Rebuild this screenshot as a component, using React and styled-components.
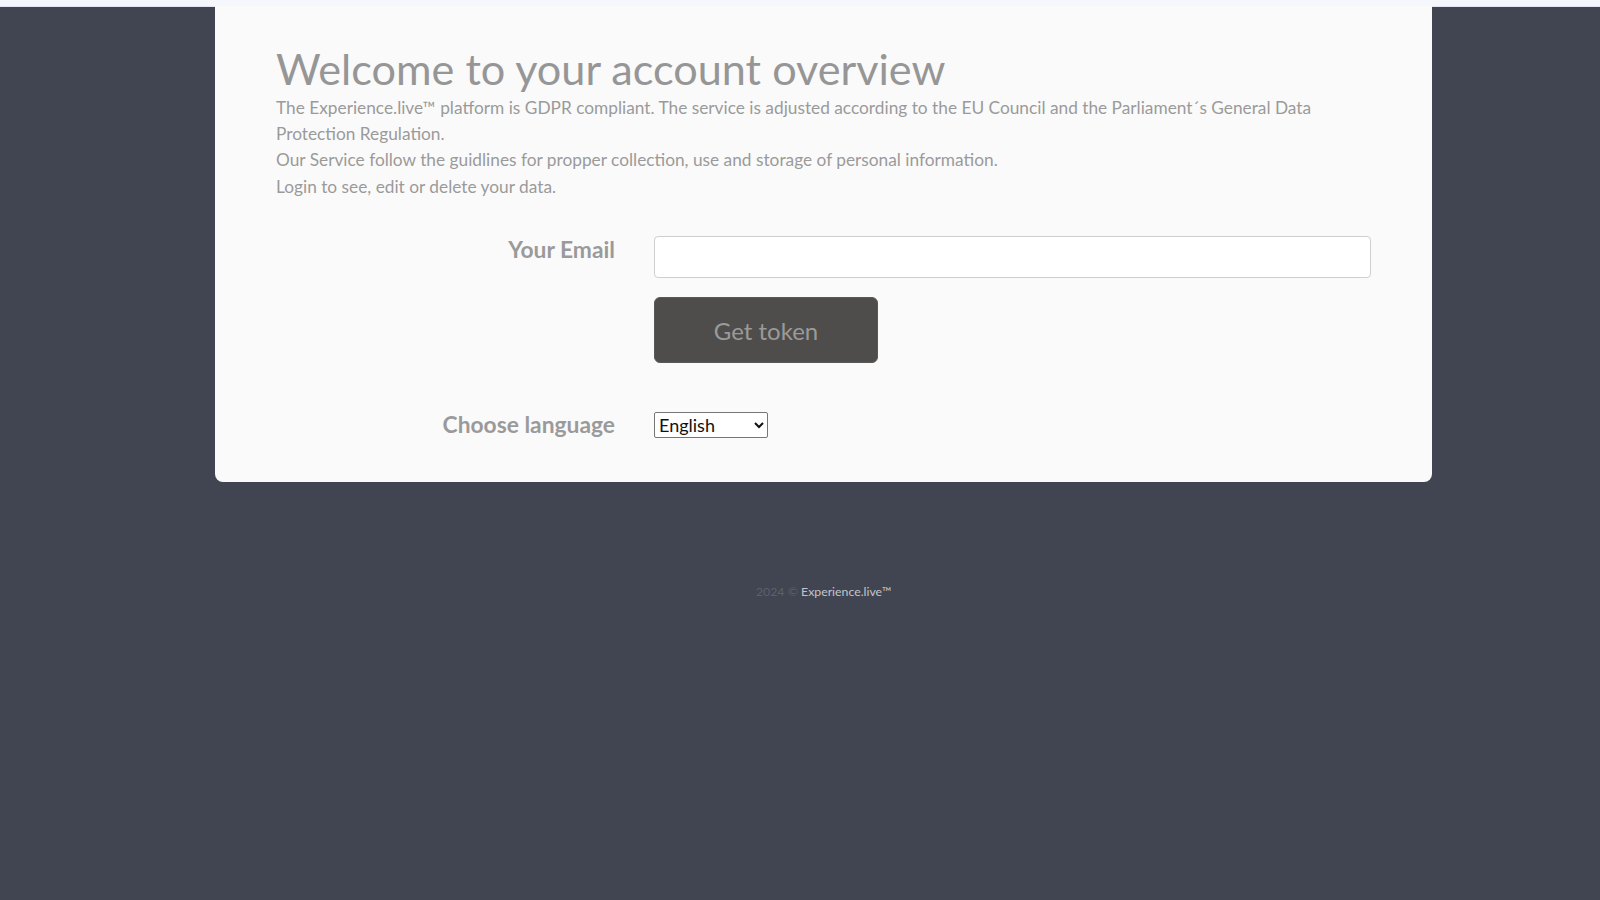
import React from "react";
import styled, { createGlobalStyle } from "styled-components";

const GlobalStyle = createGlobalStyle`
  html, body {
    margin: 0;
    padding: 0;
    background-color: #414551;
    font-family: Lato, "Open Sans", "Liberation Sans", sans-serif;
  }
  * {
    box-sizing: border-box;
  }
`;

export default function App() {
  return (
    <>
      <GlobalStyle />
      <TopStrip />
      <Page>
        <Card>
          <Title>Welcome to your account overview</Title>
          <Intro>
            The Experience.live™ platform is GDPR compliant. The service is
            adjusted according to the EU Council and the Parliament´s General
            Data Protection Regulation.
            <br />
            Our Service follow the guidlines for propper collection, use and
            storage of personal information.
            <br />
            Login to see, edit or delete your data.
          </Intro>

          <Form onSubmit={(e) => e.preventDefault()}>
            <FormRow>
              <Label htmlFor="email">Your Email</Label>
              <Field>
                <EmailInput id="email" type="email" />
                <TokenButton type="submit">Get token</TokenButton>
              </Field>
            </FormRow>

            <FormRow $center>
              <Label htmlFor="lang">Choose language</Label>
              <Field>
                <LangSelect id="lang" defaultValue="en">
                  <option value="en">English</option>
                  <option value="de">Deutsch</option>
                  <option value="da">Dansk</option>
                </LangSelect>
              </Field>
            </FormRow>
          </Form>
        </Card>

        <Footer>
          <FooterYear>2024 © </FooterYear>
          <FooterBrand>Experience.live™</FooterBrand>
        </Footer>
      </Page>
    </>
  );
}

const TopStrip = styled.div`
  height: 7px;
  background-color: #f6f7fc;
  border-bottom: 1px solid #e2e6f0;
`;

const Page = styled.main`
  padding-left: 215px;
  width: 1432px;
`;

const Card = styled.section`
  width: 1217px;
  background-color: #fafafa;
  border-radius: 0 0 8px 8px;
  padding: 37px 61px 44px;
  margin-top: -1px;
`;

const Title = styled.h1`
  margin: 0;
  font-size: 43.2px;
  font-weight: 400;
  line-height: 1.2;
  color: #969696;
`;

const Intro = styled.p`
  margin: 0;
  font-size: 17.3px;
  line-height: 26.3px;
  color: #9a9a9a;
`;

const Form = styled.form`
  display: flex;
  flex-direction: column;
  gap: 48px;
  margin-top: 36px;
`;

const FormRow = styled.div`
  display: grid;
  grid-template-columns: 339px 1fr;
  column-gap: 39px;
  align-items: ${(p) => (p.$center ? "center" : "start")};
`;

const Label = styled.label`
  text-align: right;
  font-size: 22.8px;
  font-weight: 700;
  line-height: 1.2;
  color: #9a9a9a;
`;

const Field = styled.div`
  display: flex;
  flex-direction: column;
  align-items: flex-start;
  gap: 19px;
`;

const EmailInput = styled.input`
  width: 100%;
  height: 42px;
  background: #ffffff;
  border: 1px solid #cfcfcf;
  border-radius: 4px;
  padding: 6px 12px;
  font-family: inherit;
  font-size: 18px;
  outline: none;
`;

const TokenButton = styled.button`
  width: 224px;
  height: 66px;
  border: 1px solid #5a5856;
  border-radius: 6px;
  background-color: #4f4d4b;
  color: #9a9a9a;
  font-family: inherit;
  font-size: 24px;
  cursor: pointer;
`;

const LangSelect = styled.select`
  width: 114px;
  height: 26px;
  font-family: inherit;
  font-size: 18px;
  color: #111;
  background: #ffffff;
  border: 1px solid #767676;
  border-radius: 2px;
`;

const Footer = styled.footer`
  width: 1217px;
  margin-top: 102px;
  text-align: center;
  font-size: 12.3px;
  line-height: 15px;
`;

const FooterYear = styled.span`
  color: #5c606c;
`;

const FooterBrand = styled.span`
  color: #c4c4c8;
`;
